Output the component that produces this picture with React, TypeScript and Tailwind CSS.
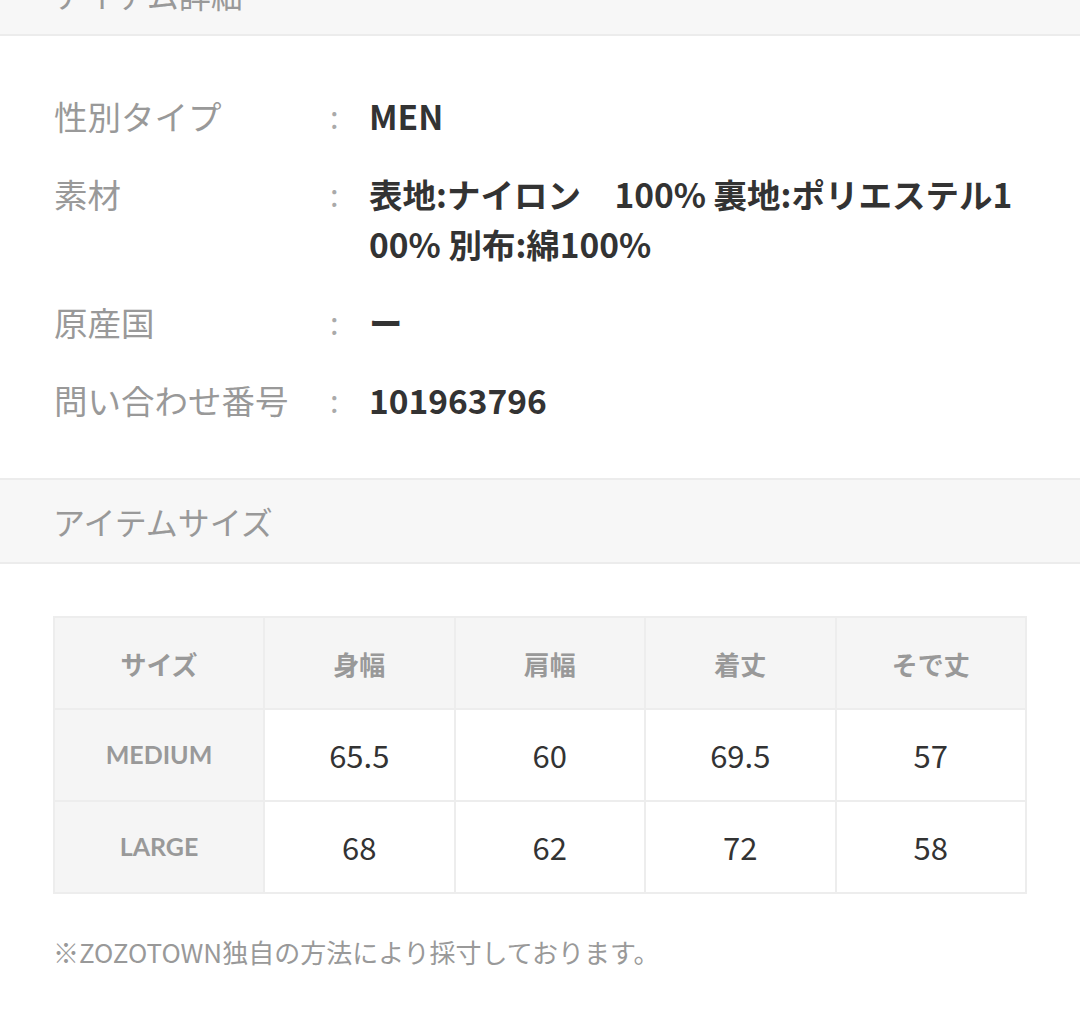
const details = [
  { label: "性別タイプ", value: "MEN" },
  { label: "素材", value: "表地:ナイロン　100% 裏地:ポリエステル100% 別布:綿100%" },
  { label: "原産国", value: "ー" },
  { label: "問い合わせ番号", value: "101963796" },
];

const headers = ["サイズ", "身幅", "肩幅", "着丈", "そで丈"];

const sizes = [
  { name: "MEDIUM", values: ["65.5", "60", "69.5", "57"] },
  { name: "LARGE", values: ["68", "62", "72", "58"] },
];

export default function App() {
  return (
    <div className="w-[1080px] h-[1017px] overflow-hidden bg-white font-['Noto_Sans_CJK_JP','Noto_Sans',sans-serif]">
      <div className="h-[36px] overflow-hidden bg-[#f7f7f7] border-b-2 border-[#ececec]">
        <p className="-mt-[26px] pl-[54px] text-[32px] leading-[40px] text-[#999]">アイテム詳細</p>
      </div>

      <div className="px-[54px] pt-[55px] pb-[53px] flex flex-col gap-[28px]">
        {details.map((d) => (
          <div key={d.label} className="flex leading-[50px]">
            <div className="w-[276px] shrink-0 text-[33.5px] text-[#999]">{d.label}</div>
            <div className="w-[39px] shrink-0 text-[31px] text-[#aaa]">:</div>
            <div className="flex-1 text-[33.5px] font-bold text-[#333] break-all">{d.value}</div>
          </div>
        ))}
      </div>

      <div className="h-[86px] flex items-center px-[53px] bg-[#f7f7f7] border-y-2 border-[#ececec]">
        <p className="text-[32px] text-[#999]">アイテムサイズ</p>
      </div>

      <div className="px-[53px] pt-[52px]">
        <table className="w-[974px] border-collapse table-fixed">
          <colgroup>
            <col className="w-[210px]" />
            <col />
            <col />
            <col />
            <col />
          </colgroup>
          <thead>
            <tr className="h-[92px] bg-[#f5f5f5]">
              {headers.map((h) => (
                <th key={h} className="border-2 border-[#ededed] text-[26px] font-bold text-[#999]">
                  {h}
                </th>
              ))}
            </tr>
          </thead>
          <tbody>
            {sizes.map((s) => (
              <tr key={s.name} className="h-[92px]">
                <td className="border-2 border-[#ededed] bg-[#f5f5f5] text-center text-[25px] font-bold text-[#999] font-['Lato','Noto_Sans',sans-serif]">
                  {s.name}
                </td>
                {s.values.map((v, i) => (
                  <td key={i} className="border-2 border-[#ededed] text-center text-[31px] text-[#333]">
                    {v}
                  </td>
                ))}
              </tr>
            ))}
          </tbody>
        </table>

        <p className="mt-[38px] text-[26px] text-[#999]">※ZOZOTOWN独自の方法により採寸しております。</p>
      </div>
    </div>
  );
}
